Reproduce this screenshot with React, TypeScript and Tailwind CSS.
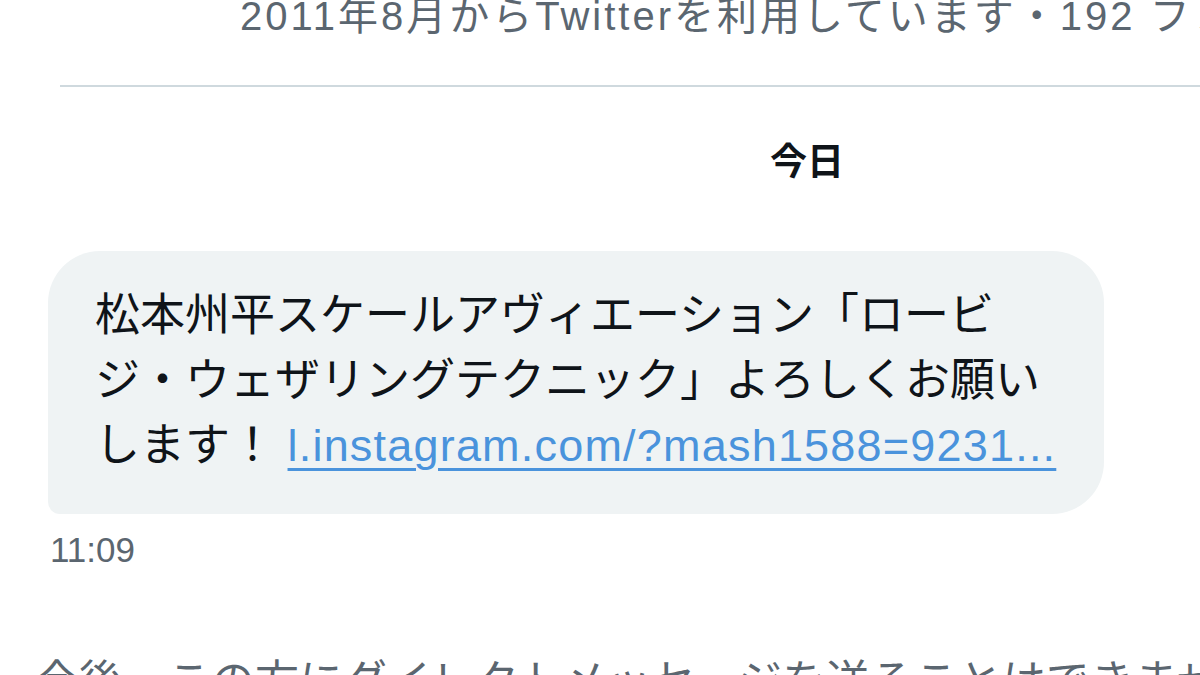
export default function App() {
  const jp = "font-['Liberation_Sans','Noto_Sans_CJK_JP',sans-serif]"

  return (
    <main className={`relative w-[1200px] h-[675px] overflow-hidden bg-white ${jp}`}>
      {/* Profile footer, cut off at top */}
      <p className="mt-[-8px] pl-[240px] whitespace-nowrap text-[40px] leading-[48px] tracking-[3px] text-[#5b6670]">
        2011年8月からTwitterを利用しています・192 フォロワー
      </p>

      <div className="ml-[60px] mt-[45px] h-[2px] bg-[#cfd9de]" />

      {/* Date separator */}
      <div className="mt-[54px] pl-[770px]">
        <span className="text-[37px] leading-[44px] font-bold text-[#0f1419]">今日</span>
      </div>

      {/* Message */}
      <div className="mt-[66px] ml-[48px] w-[1056px] rounded-[52px] rounded-bl-[12px] bg-[#eff3f4] pl-[47px] pr-[20px] pt-[32px] pb-[36px]">
        <p className="text-[45px] leading-[65px] text-[#0f1419] whitespace-nowrap">
          松本州平スケールアヴィエーション「ロービ
          <br />
          ジ・ウェザリングテクニック」よろしくお願い
          <br />
          します！{" "}
          <a className="text-[#4a93dc] tracking-[1.2px] underline decoration-[3px] underline-offset-[7px]">
            l.instagram.com/?mash1588=9231...
          </a>
        </p>
      </div>
      <p className="mt-[16px] ml-[50px] text-[35px] leading-[40px] text-[#5b6670]">11:09</p>

      {/* Blocked notice, cut off at bottom */}
      <p className="mt-[86px] ml-[35px] whitespace-nowrap text-[44px] leading-[52px] text-[#5b6670]">
        今後、この方にダイレクトメッセージを送ることはできません。
      </p>
    </main>
  )
}
